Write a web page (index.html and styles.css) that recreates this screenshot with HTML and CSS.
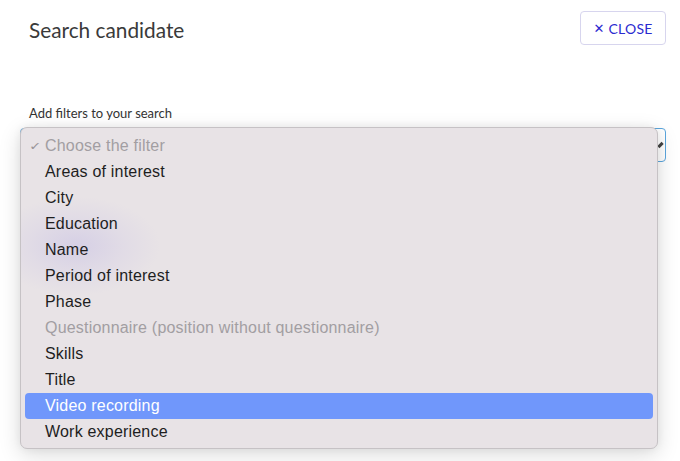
FILE: index.html
```html
<!DOCTYPE html>
<html>
<head>
<meta charset="utf-8">
<link rel="stylesheet" href="styles.css">
</head>
<body>
<div class="dialog">
  <div class="header">
    <h1 class="title">Search candidate</h1>
    <button class="close-btn"><span class="close-x">✕</span> CLOSE</button>
  </div>
  <div class="field">
    <label class="label">Add filters to your search</label>
    <div class="select-wrap">
      <div class="select"><span class="arrow"></span></div>
      <div class="popup">
        <div class="blob"></div>
        <ul class="options">
          <li class="opt disabled"><span class="check">✓</span>Choose the filter</li>
          <li class="opt">Areas of interest</li>
          <li class="opt">City</li>
          <li class="opt">Education</li>
          <li class="opt">Name</li>
          <li class="opt">Period of interest</li>
          <li class="opt">Phase</li>
          <li class="opt disabled">Questionnaire (position without questionnaire)</li>
          <li class="opt">Skills</li>
          <li class="opt">Title</li>
          <li class="opt active">Video recording</li>
          <li class="opt">Work experience</li>
        </ul>
      </div>
    </div>
  </div>
</div>
</body>
</html>
```
FILE: styles.css
```css
* { box-sizing: border-box; }
html, body { margin: 0; padding: 0; background: #fff; }
body { font-family: Lato, "Liberation Sans", sans-serif; color: #333; width: 680px; height: 461px; overflow: hidden; }
.dialog { padding: 11px 14px 0 20px; }
.header { display: flex; justify-content: space-between; align-items: flex-start; }
.title { margin: 5px 0 0 9px; font-size: 20.8px; font-weight: 400; color: #3a3a3a; line-height: 28px; }
.close-btn {
  width: 86px; height: 34px; border: 1px solid #d7d5ee; border-radius: 4px; background: #fff;
  color: #2b2bd0; font-family: Lato, sans-serif; font-size: 14px; letter-spacing: 0.2px; padding: 0;
  display: flex; align-items: center; justify-content: center; gap: 4px;
}
.close-x { font-size: 13px; font-family: "DejaVu Sans", sans-serif; }
.field { margin-top: 60px; }
.label { display: block; margin-left: 9px; font-size: 13px; color: #333; line-height: 16px; }
.select-wrap { position: relative; margin-top: 7px; }
.select { height: 34px; border: 1px solid #5ba6dd; border-radius: 4px; background: #fff; position: relative; }
.arrow { position: absolute; right: 3px; top: 13px; width: 3px; height: 6px; background: #444; transform: rotate(45deg); }
.popup {
  position: absolute; left: 0; top: -1px; width: 638px; height: 322px;
  background: #e8e3e6; border: 1px solid #c6c2c5; border-radius: 7px;
  box-shadow: 0 6px 22px rgba(0,0,0,0.14), 0 0 8px rgba(0,0,0,0.06);
  padding: 5px 4px 0 4px; overflow: hidden;
}
.blob { position: absolute; left: -30px; top: 68px; width: 170px; height: 100px; border-radius: 50%;
  background: radial-gradient(ellipse at center, rgba(195,188,228,0.5) 0%, rgba(205,198,230,0.25) 40%, rgba(232,227,230,0) 70%); }
.options { list-style: none; margin: 0; padding: 0; position: relative; }
.opt { height: 26px; line-height: 26px; padding-left: 20px; font-family: "Liberation Sans", Arial, sans-serif; font-size: 16px; letter-spacing: 0.2px; color: #1e1e1e; border-radius: 4px; position: relative; }
.opt.disabled { color: #a29ea2; }
.opt.active { background: #7097fb; color: #fff; }
.check { position: absolute; left: 4px; font-size: 15px; color: #9a969a; font-family: "DejaVu Sans", sans-serif; transform: scaleY(0.75); }
```
